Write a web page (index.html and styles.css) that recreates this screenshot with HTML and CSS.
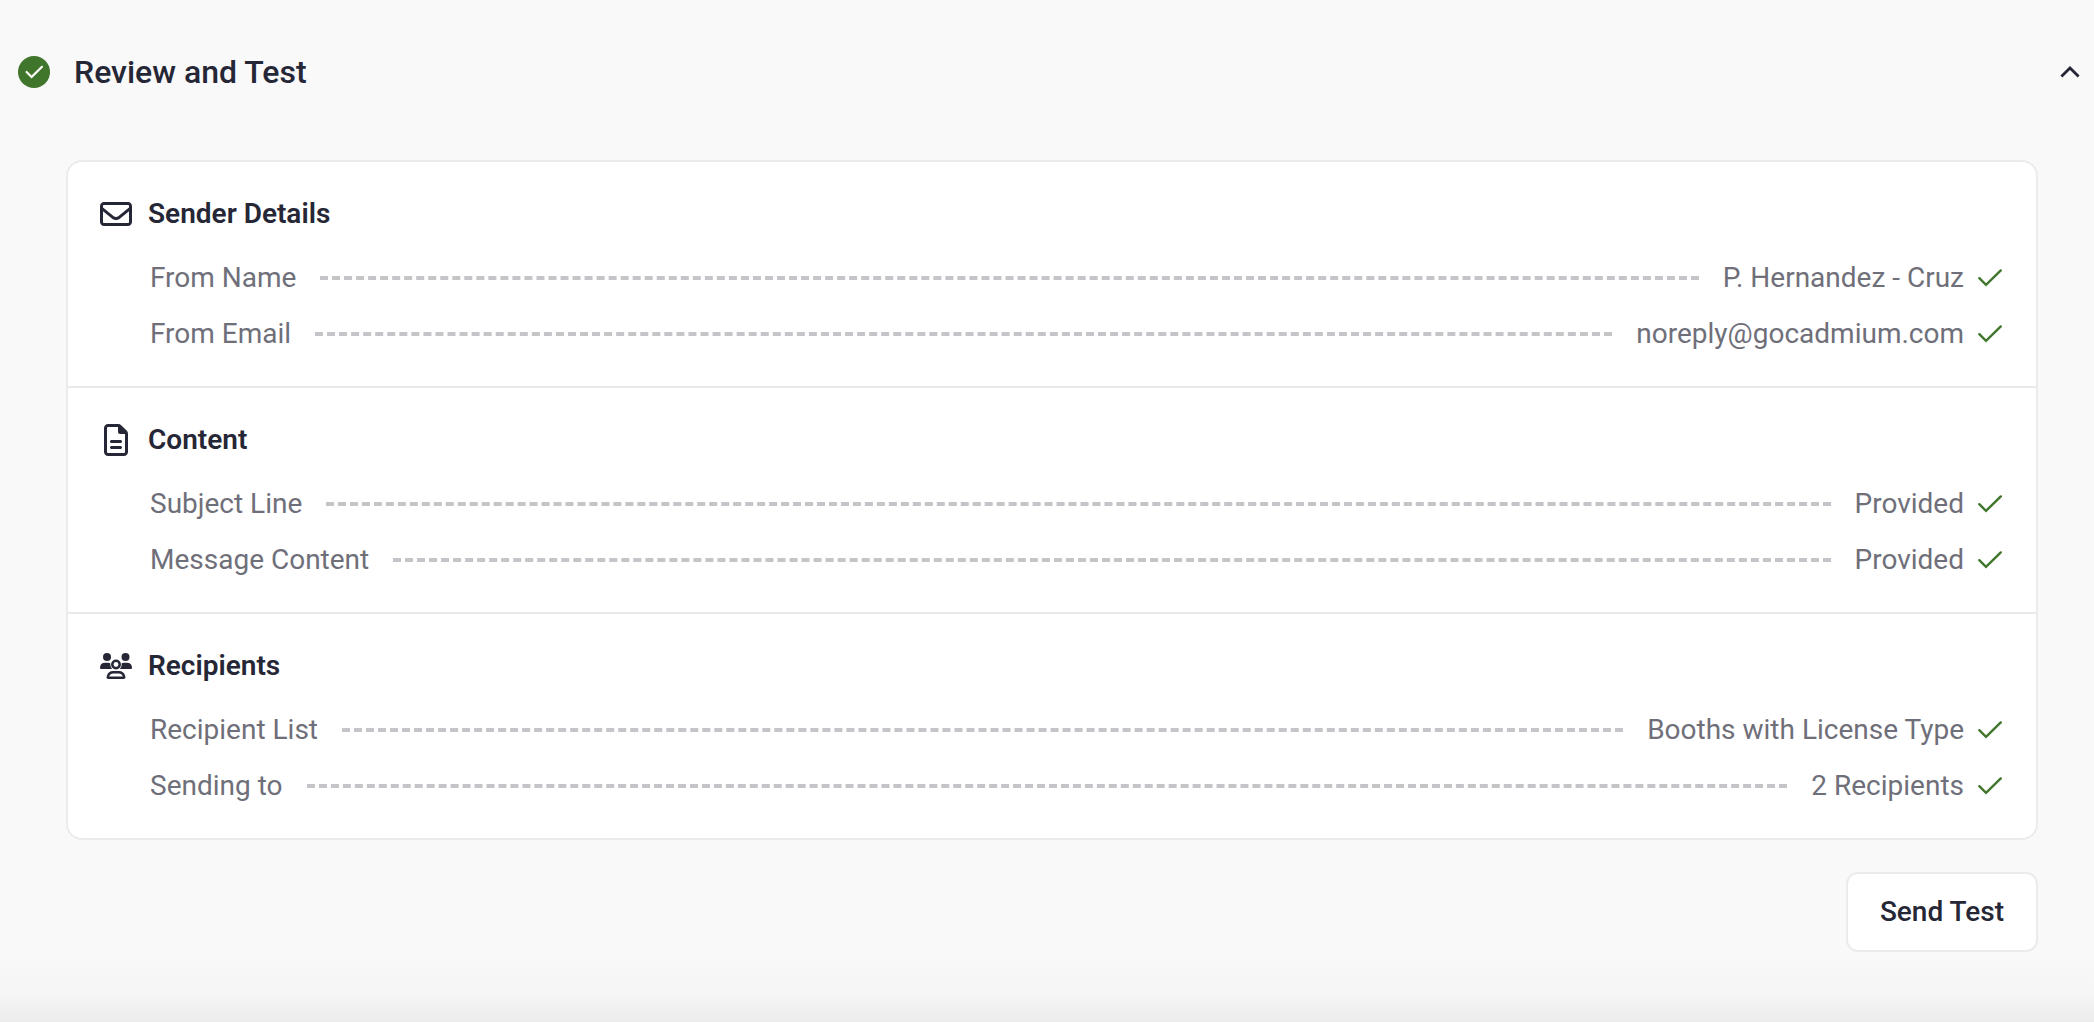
FILE: index.html
```
<!DOCTYPE html>
<html lang="en">
<head>
    <meta charset="UTF-8">
    <meta name="viewport" content="width=device-width, initial-scale=1.0">
    <title>Review and Test</title>
    <link rel="stylesheet" href="styles.css">
</head>
<body>
    <svg class="sprite">
        <symbol id="check" viewBox="0 0 28 28">
            <path d="M3.3 14.2 L10 20.9 L24.8 6.4" fill="none" stroke="currentColor" stroke-width="2.4" stroke-linecap="round"/>
        </symbol>
    </svg>

    <header class="step-header">
        <svg class="step-status" viewBox="0 0 32 32">
            <circle cx="16" cy="16" r="16" fill="#3f762c"/>
            <path d="M8.6 16 L13.6 21 L24 10.8" fill="none" stroke="#fff" stroke-width="2.2" stroke-linecap="round"/>
        </svg>
        <h1>Review and Test</h1>
        <svg class="step-toggle" viewBox="0 0 20 12">
            <path d="M1.4 10.6 L10 2 L18.6 10.6" fill="none" stroke="currentColor" stroke-width="2.8"/>
        </svg>
    </header>

    <main class="step-body">
        <div class="card">
            <section class="group">
                <h2>
                    <svg viewBox="0 0 512 512"><path fill="currentColor" d="M64 112c-8.8 0-16 7.2-16 16v22.1L220.5 291.7c20.7 17 50.4 17 71.1 0L464 150.1V128c0-8.8-7.2-16-16-16H64zM48 212.2V384c0 8.8 7.2 16 16 16H448c8.8 0 16-7.2 16-16V212.2L322 328.8c-38.4 31.5-93.7 31.5-132 0L48 212.2zM0 128C0 92.7 28.7 64 64 64H448c35.3 0 64 28.7 64 64V384c0 35.3-28.7 64-64 64H64c-35.3 0-64-28.7-64-64V128z"/></svg>
                    Sender Details
                </h2>
                <div class="row">
                    <span>From Name</span>
                    <span class="dashes"></span>
                    <span>P. Hernandez - Cruz</span>
                    <svg class="check"><use href="#check"/></svg>
                </div>
                <div class="row">
                    <span>From Email</span>
                    <span class="dashes"></span>
                    <span>noreply@gocadmium.com</span>
                    <svg class="check"><use href="#check"/></svg>
                </div>
            </section>

            <section class="group">
                <h2>
                    <svg viewBox="-64 0 512 512"><path fill="currentColor" d="M64 464c-8.8 0-16-7.2-16-16V64c0-8.8 7.2-16 16-16H224v80c0 17.7 14.3 32 32 32h80V448c0 8.8-7.2 16-16 16H64zM64 0C28.7 0 0 28.7 0 64V448c0 35.3 28.7 64 64 64H320c35.3 0 64-28.7 64-64V154.5c0-17-6.7-33.3-18.7-45.3L274.7 18.7C262.7 6.7 246.5 0 229.5 0H64zm56 256c-13.3 0-24 10.7-24 24s10.7 24 24 24H264c13.3 0 24-10.7 24-24s-10.7-24-24-24H120zm0 96c-13.3 0-24 10.7-24 24s10.7 24 24 24H264c13.3 0 24-10.7 24-24s-10.7-24-24-24H120z"/></svg>
                    Content
                </h2>
                <div class="row">
                    <span>Subject Line</span>
                    <span class="dashes"></span>
                    <span>Provided</span>
                    <svg class="check"><use href="#check"/></svg>
                </div>
                <div class="row">
                    <span>Message Content</span>
                    <span class="dashes"></span>
                    <span>Provided</span>
                    <svg class="check"><use href="#check"/></svg>
                </div>
            </section>

            <section class="group">
                <h2>
                    <svg viewBox="0 0 32 32">
                        <g fill="currentColor">
                            <circle cx="7" cy="7" r="4"/>
                            <circle cx="25.5" cy="7" r="4"/>
                            <path d="M1 19 Q0 19 0 18 Q0 12.7 5.3 12.7 H8.2 Q9.4 12.7 10.3 13.2 Q9.8 16.6 12 19 Z"/>
                            <path d="M31 19 Q32 19 32 18 Q32 12.7 26.7 12.7 H23.8 Q22.6 12.7 21.7 13.2 Q22.2 16.6 20 19 Z"/>
                        </g>
                        <g fill="none" stroke="currentColor" stroke-width="2.5">
                            <circle cx="16" cy="14.5" r="3.7"/>
                            <path d="M8.5 27.8 H23.5 Q24.5 27.8 24.2 26.8 Q23.3 22.2 18.7 22.2 H13.3 Q8.7 22.2 7.8 26.8 Q7.5 27.8 8.5 27.8 Z"/>
                        </g>
                    </svg>
                    Recipients
                </h2>
                <div class="row">
                    <span>Recipient List</span>
                    <span class="dashes"></span>
                    <span>Booths with License Type</span>
                    <svg class="check"><use href="#check"/></svg>
                </div>
                <div class="row">
                    <span>Sending to</span>
                    <span class="dashes"></span>
                    <span>2 Recipients</span>
                    <svg class="check"><use href="#check"/></svg>
                </div>
            </section>
        </div>

        <button type="button" class="send-test">Send Test</button>
    </main>
</body>
</html>
```
FILE: styles.css
```
* {
    box-sizing: border-box;
}
body {
    font-family: Roboto, sans-serif;
    font-size: 28px;
    line-height: 42px;
    color: #6f6f7a;
    background: linear-gradient(#f9f9f9, #f9f9f9 955px, #f5f5f5 995px, #ececec 1022px);
    height: 1022px;
    margin: 0;
    overflow: hidden;
}
.sprite {
    display: none;
}
.step-header {
    display: flex;
    align-items: center;
    height: 144px;
    padding: 0 14px 0 18px;
    color: #262736;
}
.step-status {
    width: 32px;
    height: 32px;
    margin-right: 24px;
}
h1 {
    flex: 1;
    margin: 0;
    font-size: 32px;
    font-weight: 500;
}
.step-toggle {
    width: 20px;
    height: 12px;
}
.step-body {
    display: flex;
    flex-direction: column;
    align-items: flex-end;
    padding: 16px 56px 0 66px;
}
.card {
    width: 100%;
    background: white;
    border: 2px solid #ebebec;
    border-radius: 16px;
}
.group {
    height: 226px;
    padding: 32px;
    border-bottom: 2px solid #e9eaeb;
}
.group:last-child {
    height: 224px;
    border-bottom: none;
}
h2 {
    display: flex;
    align-items: center;
    gap: 16px;
    margin: 0 0 23px;
    font-size: 28px;
    font-weight: 600;
    line-height: 40px;
    color: #262736;
}
h2 svg {
    width: 32px;
    height: 32px;
}
.row {
    display: flex;
    align-items: center;
    padding-left: 50px;
    margin-bottom: 14px;
}
.dashes {
    flex: 1;
    margin: 0 24px;
    border-top: 4px dashed #c4c4c9;
}
.check {
    width: 28px;
    height: 28px;
    margin-left: 12px;
    color: #3f762c;
}
.send-test {
    height: 80px;
    margin-top: 32px;
    padding: 0 32px 2px;
    font: 500 28px Roboto, sans-serif;
    color: #262736;
    background: white;
    border: 2px solid #ebebec;
    border-radius: 12px;
    cursor: pointer;
}
```
